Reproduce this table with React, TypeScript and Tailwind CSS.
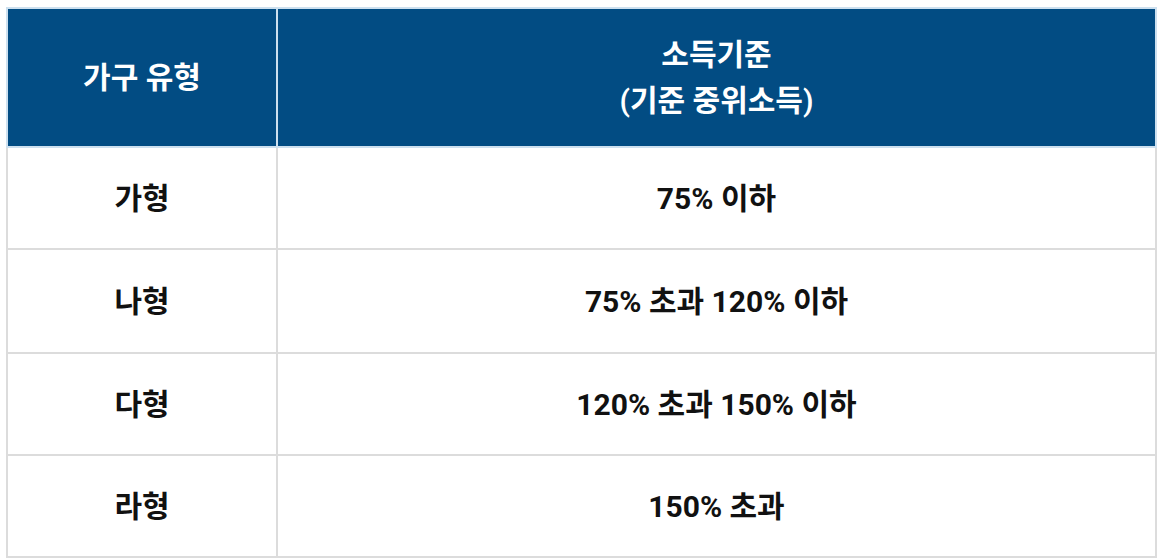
const rows = [
  { type: "가형", income: "75% 이하" },
  { type: "나형", income: "75% 초과 120% 이하" },
  { type: "다형", income: "120% 초과 150% 이하" },
  { type: "라형", income: "150% 초과" },
];

export default function App() {
  return (
    <div
      className="w-[1163px] h-[560px] bg-white pl-[6px] pt-[7px]"
      style={{ fontFamily: 'Roboto, "Noto Sans CJK KR", sans-serif' }}
    >
      <table className="w-[1151px] border-collapse table-fixed">
        <colgroup>
          <col className="w-[270px]" />
          <col />
        </colgroup>
        <thead>
          <tr className="h-[139px] bg-[#024c83] text-white">
            <th className="border-2 border-[#cde0ef] text-[30px] font-semibold">가구 유형</th>
            <th className="border-2 border-[#cde0ef] text-[30px] font-semibold leading-[46px]">
              소득기준
              <br />
              (기준 중위소득)
            </th>
          </tr>
        </thead>
        <tbody>
          {rows.map((r, i) => (
            <tr key={r.type} className={i === 1 ? "h-[104px]" : "h-[102px]"}>
              <td className="border-2 border-[#dcdcdc] text-center text-[30px] font-bold text-[#111]">
                {r.type}
              </td>
              <td className="border-2 border-[#dcdcdc] text-center text-[30px] font-bold text-[#111]">
                {r.income}
              </td>
            </tr>
          ))}
        </tbody>
      </table>
    </div>
  );
}
